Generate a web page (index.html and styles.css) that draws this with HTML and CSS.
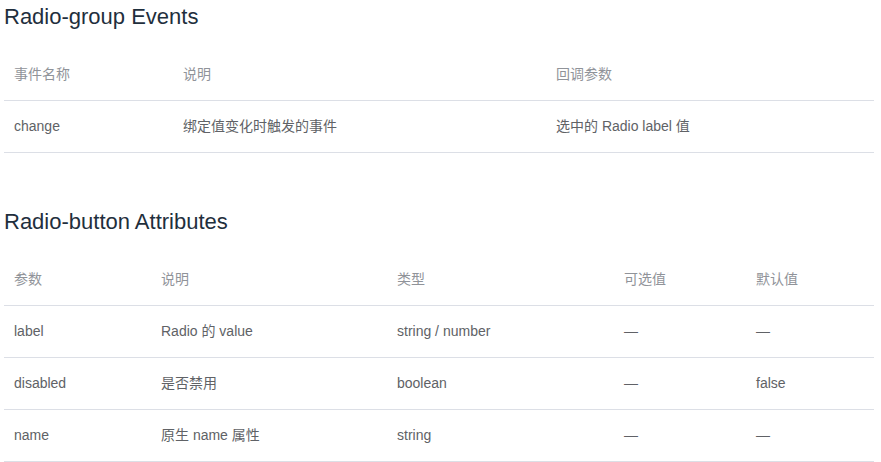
FILE: index.html
```html
<!DOCTYPE html>
<html lang="zh-CN">
<head>
<meta charset="utf-8">
<link rel="stylesheet" href="styles.css">
</head>
<body>
<div class="doc">
  <h3 class="title first">Radio-group Events</h3>
  <table class="api">
    <colgroup><col class="e1"><col class="e2"><col class="e3"></colgroup>
    <thead>
      <tr><th>事件名称</th><th>说明</th><th>回调参数</th></tr>
    </thead>
    <tbody>
      <tr><td>change</td><td>绑定值变化时触发的事件</td><td>选中的 Radio label 值</td></tr>
    </tbody>
  </table>

  <h3 class="title">Radio-button Attributes</h3>
  <table class="api">
    <colgroup><col class="a1"><col class="a2"><col class="a3"><col class="a4"><col class="a5"></colgroup>
    <thead>
      <tr><th>参数</th><th>说明</th><th>类型</th><th>可选值</th><th>默认值</th></tr>
    </thead>
    <tbody>
      <tr><td>label</td><td>Radio 的 value</td><td>string / number</td><td>—</td><td>—</td></tr>
      <tr><td>disabled</td><td>是否禁用</td><td>boolean</td><td>—</td><td>false</td></tr>
      <tr><td>name</td><td>原生 name 属性</td><td>string</td><td>—</td><td>—</td></tr>
    </tbody>
  </table>
</div>
</body>
</html>
```
FILE: styles.css
```css
html, body {
  margin: 0;
  padding: 0;
  background: #fff;
}
body {
  font-family: "Liberation Sans", "Noto Sans CJK SC", sans-serif;
}
.doc {
  width: 870px;
  padding-left: 4px;
}
.title {
  font-size: 22px;
  font-weight: 400;
  color: #1f2f3d;
  line-height: 25px;
  margin: 56px 0 20px;
}
.title.first {
  margin-top: 4px;
}
.api {
  width: 870px;
  border-collapse: collapse;
  table-layout: fixed;
  font-size: 14px;
  line-height: 1.5em;
}
.api th, .api td {
  text-align: left;
  padding: 15px 10px;
  border-bottom: 1px solid #dcdfe6;
  font-weight: 400;
  white-space: nowrap;
}
.api th { color: #909399; }
.api td { color: #606266; }
.e1 { width: 169px; }
.e2 { width: 373px; }
.e3 { width: 328px; }
.a1 { width: 147px; }
.a2 { width: 236px; }
.a3 { width: 227px; }
.a4 { width: 132px; }
.a5 { width: 128px; }
```
